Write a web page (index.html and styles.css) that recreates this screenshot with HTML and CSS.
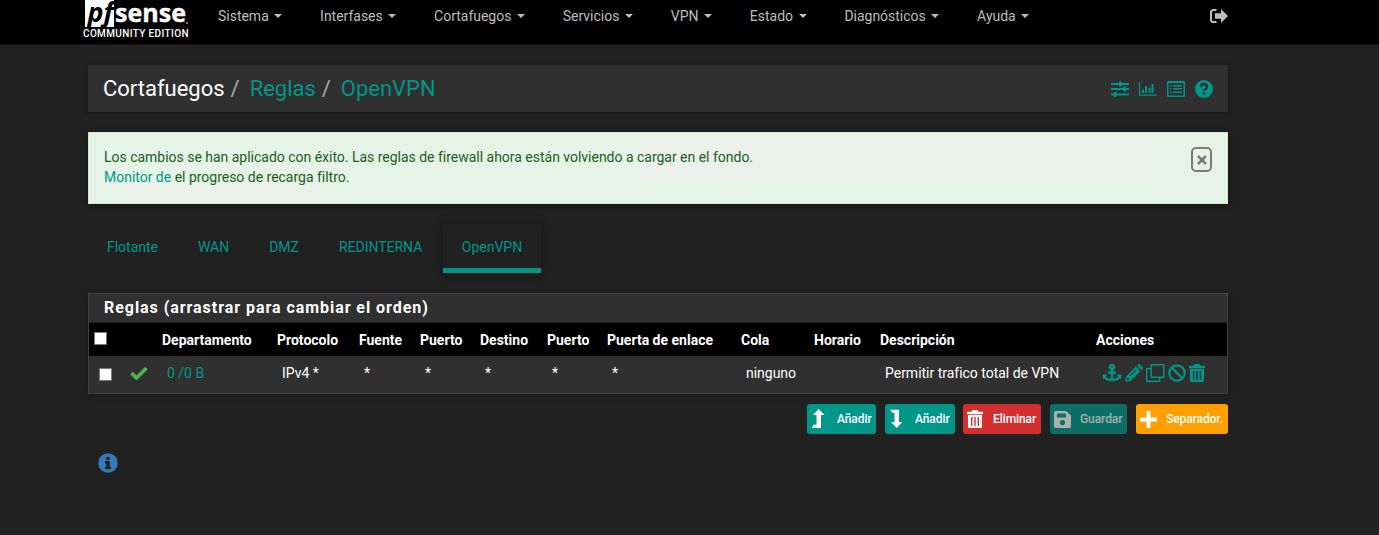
FILE: index.html
```html
<!DOCTYPE html>
<html lang="es">
<head>
<meta charset="utf-8">
<title>pfSense - Cortafuegos: Reglas: OpenVPN</title>
<link rel="stylesheet" href="styles.css">
</head>
<body>
<svg class="sprite" width="0" height="0">
  <symbol id="trash" viewBox="0 0 16 18"><path fill-rule="evenodd" d="M0 1.800h4.500l1-1.800h5l1 1.800H16v2.400H0zM1 5h14v11.500q0 1.500-1.500 1.500h-11Q1 18 1 16.500zM4 7v9h1.400V7zM7.300 7v9h1.400V7zM10.600 7v9H12V7z"/></symbol>
</svg>
<nav class="navbar">
  <div class="container nav-row">
    <a class="brand">
      <svg class="logo" width="106" height="38" viewBox="0 0 106 38">
        <path class="logo-tile" d="M2 0h29v27H2z"/>
        <text class="logo-pf" x="4.500" y="21.500" textLength="26" lengthAdjust="spacingAndGlyphs">pf</text>
        <text class="logo-sense" x="32" y="22" textLength="71" lengthAdjust="spacingAndGlyphs">sense</text>
        <circle class="logo-tile" cx="104" cy="23" r=".8"/>
        <text class="logo-sub" x="0" y="37" textLength="105.500">COMMUNITY EDITION</text>
      </svg>
    </a>
    <ul class="menu">
      <li>Sistema<i class="caret"></i></li>
      <li>Interfases<i class="caret"></i></li>
      <li>Cortafuegos<i class="caret"></i></li>
      <li>Servicios<i class="caret"></i></li>
      <li>VPN<i class="caret"></i></li>
      <li>Estado<i class="caret"></i></li>
      <li>Diagnósticos<i class="caret"></i></li>
      <li>Ayuda<i class="caret"></i></li>
    </ul>
    <svg class="logout" width="18" height="14" viewBox="0 0 18 14"><path d="M6.500 1H3.500Q1 1 1 3.500v7Q1 13 3.500 13h3" fill="none" stroke="currentColor" stroke-width="2"/><path d="M5 4.200h6V0l7 7-7 7V9.800H5z"/></svg>
  </div>
</nav>
<main class="container">
  <header class="page-head">
    <ol class="crumbs"><li>Cortafuegos</li><li class="sep">/</li><li class="link">Reglas</li><li class="sep">/</li><li class="link">OpenVPN</li></ol>
    <div class="head-icons">
      <svg width="18" height="16" viewBox="0 0 18 16"><path d="M0 2h18v2H0zM0 7h18v2H0zM0 12.500h18v2H0zM8 .5h2.500v5H8zM12.500 5.500H15v5h-2.500zM3 11h2.500v5H3z"/></svg>
      <svg width="18" height="15" viewBox="0 0 18 15"><path d="M0 1h1.200v12.500H18v1.200H0zM3 8.500h2V12H3zM6 5h2v7H6zM9.500 6.500h2V12h-2zM12.500 3h2v9h-2z"/></svg>
      <svg width="18" height="16" viewBox="0 0 18 16"><path fill-rule="evenodd" d="M1.500 0h15Q18 0 18 1.500v13Q18 16 16.500 16h-15Q0 16 0 14.500v-13Q0 0 1.500 0zM1.500 2v12.500h15V2zM3 4h1.500v1.500H3zM6 4h9v1.500H6zM3 7h1.500v1.500H3zM6 7h9v1.500H6zM3 10.500h1.500V12H3zM6 10.500h9V12H6z"/></svg>
      <svg width="18" height="18" viewBox="0 0 18 18"><circle cx="9" cy="9" r="9"/><path d="M6 7q0-3 3-3t3 2.700Q12 8.200 10.500 9 9 9.700 9 11" fill="none" stroke="#303030" stroke-width="2.300"/><path d="M7.800 12.300h2.400v2.200H7.800z" fill="#303030"/></svg>
    </div>
  </header>
  <section class="alert">
    <p>Los cambios se han aplicado con éxito. Las reglas de firewall ahora están volviendo a cargar en el fondo.<br><a>Monitor de</a> el progreso de recarga filtro.</p>
    <button class="close"><svg width="10" height="10" viewBox="0 0 10 10"><path d="M1 1l8 8M9 1L1 9" stroke="#777" stroke-width="2.500"/></svg></button>
  </section>
  <ul class="tabs"><li>Flotante</li><li>WAN</li><li>DMZ</li><li>REDINTERNA</li><li class="active">OpenVPN</li></ul>
  <section class="panel">
    <h2>Reglas (arrastrar para cambiar el orden)</h2>
    <table>
      <colgroup><col class="c-check"><col class="c-state"><col class="c-dep"><col class="c-proto"><col class="c-src"><col class="c-port"><col class="c-dst"><col class="c-dport"><col class="c-gw"><col class="c-queue"><col class="c-sched"><col class="c-desc"><col class="c-act"></colgroup>
      <thead><tr><th><span class="box"></span></th><th></th><th>Departamento</th><th>Protocolo</th><th>Fuente</th><th>Puerto</th><th>Destino</th><th>Puerto</th><th>Puerta de enlace</th><th>Cola</th><th>Horario</th><th>Descripción</th><th>Acciones</th></tr></thead>
      <tbody><tr>
        <td><span class="box"></span></td>
        <td class="state"><svg width="18" height="14" viewBox="0 0 18 14"><path d="M1.500 7l5 5L16.500 2" fill="none" stroke="#4caf50" stroke-width="3.800"/></svg></td>
        <td class="link">0 /0 B</td><td>IPv4 *</td><td>*</td><td>*</td><td>*</td><td>*</td><td>*</td><td>ninguno</td><td></td><td>Permitir trafico total de VPN</td>
        <td><div class="actions">
          <svg width="20" height="18" viewBox="0 0 20 18"><g fill="none" stroke="currentColor" stroke-width="2.300"><circle cx="10" cy="3" r="2"/><path d="M10 5v11M6 8.500h8M2 12q2 4 8 4t8-4"/></g><path d="M.5 10.500h5l-4.500 5zM19.500 10.500h-5l4.500 5z"/></svg>
          <svg width="18" height="18" viewBox="0 0 18 18"><path fill-rule="evenodd" d="M0 18l1-5.500L11 2.500 15.500 7l-10 10zM2 14.500L1.600 16.400l2 -.4 1-1.200-1.400-1.400zM4.500 11.500l.8.8 6.500-6.500-.8-.8zM12 1.500l1-1q1-1 2 0L17.500 3q1 1 0 2l-1 1z"/></svg>
          <svg width="19" height="18" viewBox="0 0 19 18"><path d="M5.200.7h12.600v12.600H5.200zM5 4.700H.7v12.600h13.100V13.500" fill="none" stroke="currentColor" stroke-width="1.400"/></svg>
          <svg width="18" height="18" viewBox="0 0 18 18"><g fill="none" stroke="currentColor" stroke-width="2.200"><circle cx="9" cy="9" r="7.700"/><path d="M3.500 3.500l11 11"/></g></svg>
          <svg width="16" height="18"><use href="#trash"/></svg>
        </div></td>
      </tr></tbody>
    </table>
  </section>
  <div class="buttons">
    <button class="btn add"><svg width="17" height="20" viewBox="0 0 17 20"><path d="M2.500 15.800H5.500V6H2L7.700 0l5.800 6H10v13H1z"/></svg>Añadir</button>
    <button class="btn add2"><svg width="17" height="20" viewBox="0 0 17 20"><path d="M1 .8h9V13h3.300l-5.600 6-5.700-6h3.500V4H3.500z"/></svg>Añadir</button>
    <button class="btn del"><svg width="16" height="18"><use href="#trash"/></svg>Eliminar</button>
    <button class="btn save"><svg width="17" height="17" viewBox="0 0 17 17"><path fill-rule="evenodd" d="M1.500 0H12l5 4.500v11Q17 17 15.500 17h-14Q0 17 0 15.500v-14Q0 0 1.500 0zM3 2.500v4h9v-4zM8.500 9a2.600 2.600 0 1 0 .01 0z"/></svg>Guardar</button>
    <button class="btn divi"><svg width="17" height="17" viewBox="0 0 17 17"><path d="M6.500 0h4v6.500H17v4h-6.500V17h-4v-6.500H0v-4h6.500z"/></svg>Separador.</button>
  </div>
  <div class="info"><svg width="20" height="20" viewBox="0 0 20 20"><circle cx="10" cy="10" r="9.800"/><path d="M8.300 4h3.400v2.700H8.300zM7 8h4.700v5.800H13V16H7v-2.200h1.300v-3.600H7z" fill="#212121"/></svg></div>
</main>
</body>
</html>
```
FILE: styles.css
```css
* { box-sizing: border-box; }
body { margin: 0; background: #212121; color: #fff; font: 14px/20px Roboto, sans-serif; letter-spacing: -.015px; }
ul, ol, p, h2 { margin: 0; padding: 0; list-style: none; }
svg { display: block; fill: currentColor; flex: none; }
.sprite { position: absolute; }
.container { width: 1140px; margin-left: 88px; }
.navbar { height: 45px; background: #000; border-bottom: 1px solid #151515; }
.nav-row { display: flex; align-items: flex-start; }
.brand { margin-left: -5px; }
.logo { overflow: visible; }
.logo-tile, .logo-sense, .logo-sub { fill: #fff; }
.logo-pf { font: italic 700 26px "Open Sans", sans-serif; fill: #000; }
.logo-sense { font: 700 25px "Open Sans", sans-serif; letter-spacing: 0; stroke: #fff; stroke-width: .4px; }
.logo-sub { font: 500 10px Roboto, sans-serif; }
.menu { display: flex; flex: 1; padding: 6px 0 0 29px; color: #bdbdbd; }
.menu li { display: flex; align-items: center; margin-right: 37.7px; }
.caret { margin-left: 5.7px; border: 4px solid transparent; border-top-color: currentColor; border-bottom: 0; }
.logout { margin: 9px 0 0; color: #bdbdbd; }
.page-head { display: flex; justify-content: space-between; align-items: center; height: 47px; margin-top: 20px; padding: 0 15px; background: #303030; box-shadow: 0 1px 4px rgba(0,0,0,.35); }
.crumbs { display: flex; font-size: 22px; }
.sep { color: #aaa; padding: 0 10px 0 6px; }
.link { color: #009688; }
.head-icons { display: flex; align-items: center; gap: 10px; color: #009688; }
.alert { display: flex; justify-content: space-between; height: 72px; margin-top: 20px; padding: 14px 15px; color: #1b5e20; border: 1px solid #d6e9c6; background: linear-gradient(#ebf0ea, #ebf0ea) 549px 0/514px 47px no-repeat, linear-gradient(#ebf0ea, #ebf0ea) 36px 50px/192px 21px no-repeat, #e6f4e7; box-shadow: 0 1px 6px rgba(0,0,0,.3); }
.alert a { color: #009688; }
.close { display: flex; align-items: center; justify-content: center; width: 21px; height: 25px; padding: 0; border: 2px solid #7a7a7a; border-radius: 5px; background: #ebf0ea; }
.tabs { display: flex; height: 49px; margin-top: 20px; color: #009688; }
.tabs li { padding: 13px 19px 0; margin-right: 2px; }
.tabs .active { padding-inline: 18.5px; border-bottom: 5px solid #009688; box-shadow: 0 1px 10px rgba(0,0,0,.35); }
.panel { margin-top: 20px; border: 1px solid #424242; background: #303030; box-shadow: 0 1px 6px rgba(0,0,0,.3); }
h2 { height: 29px; padding: 4px 15px; font-size: 16px; font-weight: 700; letter-spacing: .95px; border-bottom: 1px solid #212121; }
table { width: 1138px; table-layout: fixed; border-collapse: collapse; }
th { height: 33px; padding: 1px 5px 0; text-align: left; font-weight: 700; letter-spacing: 0; background: #000; }
td { height: 37px; padding: 0 0 3px 10px; }
td.state { padding-left: 6px; }
.c-check { width: 35px; } .c-state { width: 33px; } .c-dep { width: 115px; } .c-proto { width: 82px; }
.c-src { width: 61px; } .c-port { width: 60px; } .c-dst { width: 67px; } .c-dport { width: 60px; }
.c-gw { width: 134px; } .c-queue { width: 73px; } .c-sched { width: 66px; } .c-desc { width: 216px; } .c-act { width: 136px; }
.box { display: block; width: 13px; height: 13px; border: 1px solid #777; background: #fff; }
th .box { margin-bottom: 3px; }
td .box { margin-top: 3px; }
.actions { display: flex; align-items: center; gap: 3px; margin-left: 1px; color: #009688; }
.buttons { display: flex; justify-content: flex-end; gap: 9px; margin-top: 10px; }
.btn { display: flex; align-items: center; gap: 9px; height: 30px; padding: 0 4px; border: 0; border-radius: 3px; color: #fff; font: 500 12px Roboto, sans-serif; letter-spacing: -.08px; }
.add, .add2 { background: #009688; }
.add { width: 69px; } .add2 { width: 70px; }
.del { width: 78px; gap: 10px; margin-left: -1px; background: #d32f2f; }
.save { width: 77px; background: #0b6f66; color: #a9b0af; }
.divi { width: 92px; background: #ffa000; }
.info { margin: 19px 0 0 10px; color: #337ab7; }
```
